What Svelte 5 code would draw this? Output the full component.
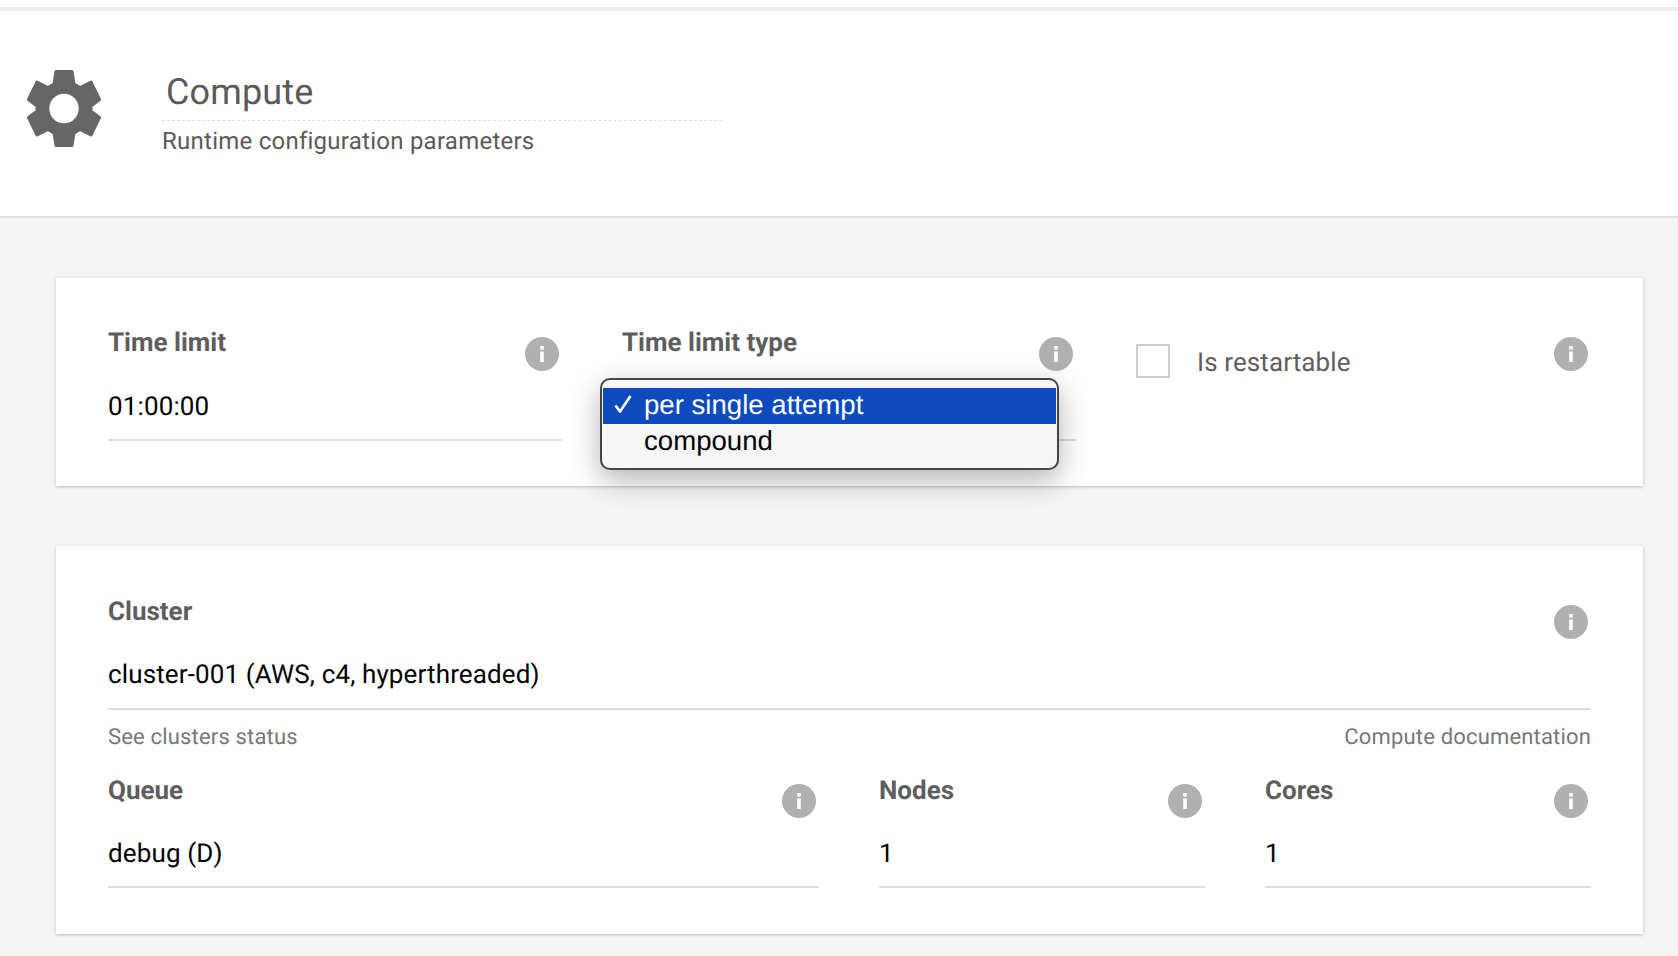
<script>
  const timeFields = [
    { label: 'Time limit', value: '01:00:00' },
    { label: 'Time limit type', value: '', select: true }
  ];
  const lower = [
    { label: 'Queue', value: 'debug (D)' },
    { label: 'Nodes', value: '1' },
    { label: 'Cores', value: '1' }
  ];
</script>

{#snippet info()}
  <svg class="info" viewBox="0 0 34 34" aria-hidden="true">
    <circle cx="17" cy="17" r="17" fill="#b0b0b0" />
    <rect x="15.200" y="9" width="3.600" height="3.600" fill="#fff" />
    <rect x="15.200" y="14.500" width="3.600" height="10.500" fill="#fff" />
  </svg>
{/snippet}

<div class="page">
  <header class="head">
    <svg class="gear" viewBox="0 0 74 77" aria-hidden="true">
      <path fill-rule="evenodd" fill="#666" stroke="#666" stroke-width="3" stroke-linejoin="round" d="M29 1.500H45L47 14L53 17.500L64 12L72.500 29.500L64 36V41L72.500 47.500L64 65L53 59.500L47 63L45 75.500H29L27 63L21 59.500L10 65L1.500 47.500L10 41V36L1.500 29.500L10 12L21 17.500L27 14ZM37 22.300A16.200 16.200 0 1 0 37 54.700A16.200 16.200 0 1 0 37 22.300Z" />
    </svg>
    <div class="titles">
      <h1>Compute</h1>
      <p>Runtime configuration parameters</p>
    </div>
  </header>

  <main>
    <section class="card first three">
      {#each timeFields as f}
        <div class="field">
          <div class="top">
            <span class="label">{f.label}</span>
            {@render info()}
          </div>
          <div class="value">{f.value}&nbsp;</div>
          {#if f.select}
            <div class="menu">
              <div class="opt sel">
                <svg class="check" viewBox="0 0 18 18" aria-hidden="true"><path d="M1.500 10.500L6 16.500L16.500 1" fill="none" stroke="#fff" stroke-width="2.600" /></svg>
                per single attempt
              </div>
              <div class="opt">compound</div>
            </div>
          {/if}
        </div>
      {/each}
      <div class="field check-field">
        <span class="box"></span>
        <span class="check-label">Is restartable</span>
        {@render info()}
      </div>
    </section>

    <section class="card second">
      <div class="field">
        <div class="top">
          <span class="label">Cluster</span>
          {@render info()}
        </div>
        <div class="value cluster">cluster-001 (AWS, c4, hyperthreaded)</div>
      </div>
      <div class="links">
        <span>See clusters status</span>
        <span>Compute documentation</span>
      </div>
      <div class="row">
        {#each lower as f}
          <div class="field">
            <div class="top">
              <span class="label">{f.label}</span>
              {@render info()}
            </div>
            <div class="value">{f.value}</div>
          </div>
        {/each}
      </div>
    </section>
  </main>
</div>

<style>
  :global(body) {
    margin: 0;
    background: #f4f4f4;
    font-family: Roboto, "Liberation Sans", sans-serif;
    text-rendering: geometricPrecision;
  }
  .page {
    height: 956px;
    overflow: hidden;
  }
  .head {
    box-sizing: border-box;
    height: 218px;
    margin: 0;
    padding: 11px 0 0 27px;
    background: #fff;
    border-top: 7px solid #fff;
    border-bottom: 2px solid #dfe2ec;
    display: flex;
    align-items: flex-start;
    position: relative;
  }
  .head::before {
    content: "";
    display: block;
    position: absolute;
    left: 0;
    right: 0;
    top: 0;
    height: 4px;
    background: #eeeeee;
  }
  .gear {
    width: 74px;
    height: 77px;
    margin-top: 52px;
    flex: none;
  }
  .titles {
    margin-left: 61px;
    margin-top: 45px;
  }
  h1 {
    margin: 0;
    box-sizing: border-box;
    width: 560px;
    height: 58px;
    padding: 7px 0 0 4px;
    font-size: 36px;
    line-height: 44px;
    font-weight: 400;
    letter-spacing: 0.15px;
    color: #5a5a5a;
    border-bottom: 1px dashed #dedede;
  }
  .titles p {
    margin: 5px 0 0;
    font-size: 24px;
    line-height: 30px;
    letter-spacing: 0.25px;
    color: #5a5a5a;
  }
  main {
    padding: 60px 35px 0 56px;
    display: flex;
    flex-direction: column;
    gap: 60px;
  }
  .card {
    background: #fff;
    box-shadow: 0 1px 3px rgba(0, 0, 0, 0.22);
    padding: 49px 52px 45px;
  }
  .second {
    padding-bottom: 46px;
  }
  .three {
    display: grid;
    grid-template-columns: 454px 454px 1fr;
    column-gap: 60px;
  }
  .field {
    position: relative;
  }
  .top {
    display: flex;
    justify-content: space-between;
    align-items: flex-start;
    height: 44px;
    padding-right: 3px;
    margin-bottom: 20px;
  }
  .label {
    padding-top: 1px;
    font-size: 26px;
    line-height: 30px;
    font-weight: 700;
    color: #5e5e5e;
  }
  .second .label {
    padding-top: 2px;
  }
  .info {
    width: 34px;
    height: 34px;
    margin-top: 10px;
    flex: none;
  }
  .value {
    font-size: 26px;
    line-height: 30px;
    letter-spacing: 0.13px;
    color: #000;
    padding-top: 1px;
    padding-bottom: 17px;
    border-bottom: 2px solid #dedede;
  }
  .value.cluster {
    padding-bottom: 18px;
  }
  .menu {
    position: absolute;
    left: -22px;
    top: 51px;
    width: 459px;
    height: 92px;
    box-sizing: border-box;
    padding: 8px 1px;
    background: #f6f6f6;
    border: 2px solid #444;
    border-radius: 10px;
    box-shadow: 0 10px 30px rgba(0, 0, 0, 0.3);
    font-family: "Liberation Sans", sans-serif;
    font-size: 27.600px;
    line-height: 33px;
    letter-spacing: 0;
    color: #000;
  }
  .opt {
    position: relative;
    padding-left: 41px;
    height: 36px;
  }
  .sel {
    background: #0d4bbd;
    color: #fff;
  }
  .check {
    position: absolute;
    left: 11px;
    top: 7px;
    width: 18px;
    height: 18px;
  }
  .check-field {
    display: flex;
    align-items: flex-start;
  }
  .box {
    box-sizing: border-box;
    width: 34px;
    height: 34px;
    margin-top: 17px;
    border: 2px solid #cccccc;
    flex: none;
  }
  .check-label {
    flex: 1;
    margin: 21px 0 0 27px;
    font-size: 26px;
    line-height: 30px;
    letter-spacing: 0.1px;
    color: #5e5e5e;
  }
  .check-field .info {
    margin-right: 3px;
  }
  .links {
    display: flex;
    justify-content: space-between;
    height: 64px;
    box-sizing: border-box;
    padding-top: 13px;
    font-size: 22px;
    line-height: 30px;
    letter-spacing: 0.17px;
    color: #777;
  }
  .row {
    display: grid;
    grid-template-columns: 1fr 326px 326px;
    column-gap: 60px;
  }
</style>
